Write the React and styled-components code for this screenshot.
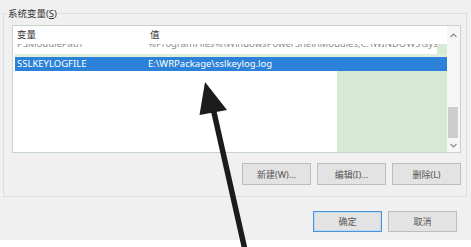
import React from 'react';
import styled, { createGlobalStyle } from 'styled-components';

const Global = createGlobalStyle`
  html, body { margin: 0; padding: 0; background: #f0f0f0; }
  body {
    width: 471px; height: 247px; overflow: hidden;
    font-family: "Noto Sans", "Noto Sans CJK SC", sans-serif;
  }
`;

const Screen = styled.div`
  position: relative;
  width: 471px;
  height: 247px;
  display: flex;
  flex-direction: column;
  background: #f0f0f0;
  overflow: hidden;
`;

const Dialog = styled.div`
  height: 240px;
  display: flex;
  flex-direction: column;
  padding: 13px 4px 0 3px;
  box-sizing: border-box;
`;

const WhiteStrip = styled.div`
  flex: 1;
  background: #ffffff;
`;

const GroupBox = styled.div`
  border: 1px solid #dedede;
  display: flex;
  flex-direction: column;
  padding: 0 5px 11px 8px;
`;

const Legend = styled.div`
  align-self: flex-start;
  margin: -7px 0 0 -5px;
  padding: 0 1px;
  height: 13px;
  line-height: 13px;
  font-size: 9.5px;
  color: #333;
  background: #f0f0f0;
  u { text-decoration: underline; }
`;

const ListBox = styled.div`
  margin-top: 5px;
  height: 128px;
  border: 1px solid #c6d3c8;
  box-sizing: border-box;
  display: flex;
  background: #fff;
`;

const ListMain = styled.div`
  flex: 1;
  display: flex;
  flex-direction: column;
  overflow: hidden;
`;

const Header = styled.div`
  height: 18px;
  flex: none;
  display: grid;
  grid-template-columns: 133px 1fr;
  align-items: center;
  font-size: 9.5px;
  color: #333;
`;

const HeaderCell = styled.div`
  padding-left: 4px;
  line-height: 16px;
`;

const Row = styled.div`
  flex: none;
  display: grid;
  grid-template-columns: 131px 1fr ${p => (p.$tail ? '10px' : '0px')};
  height: ${p => p.$h}px;
  margin-left: 2px;
  overflow: hidden;
  font-size: 9.5px;
  white-space: nowrap;
  background: ${p => (p.$selected ? '#2b82d8' : 'transparent')};
  color: ${p => (p.$selected ? '#ffffff' : '#8a8a8a')};
  border-bottom: ${p => (p.$band ? '3px solid #dfeedd' : 'none')};
  box-sizing: border-box;
`;

const Cell = styled.div`
  padding-left: 2px;
  overflow: hidden;
  line-height: ${p => p.$lh || 14}px;
  margin-top: ${p => p.$shift || 0}px;
`;

const GreenTail = styled.div`
  background: #d6ead4;
`;

const Filler = styled.div`
  flex: 1;
  display: flex;
  justify-content: flex-end;
`;

const GreenBlock = styled.div`
  width: 110px;
  background: #d5e9d3;
`;

const Scrollbar = styled.div`
  width: 13px;
  flex: none;
  display: flex;
  flex-direction: column;
  background: #f6f6f6;
`;

const ArrowBtn = styled.div`
  height: 13px;
  display: flex;
  align-items: center;
  justify-content: center;
  margin-top: ${p => (p.$top ? '3px' : '0')};
`;

const Track = styled.div`
  flex: 1;
  display: flex;
  flex-direction: column;
  justify-content: flex-end;
  padding: 0 2px 1px 1px;
`;

const Thumb = styled.div`
  height: 31px;
  background: #cdcdcd;
`;

const ButtonRow = styled.div`
  display: flex;
  justify-content: flex-end;
  gap: 6px;
  margin-top: 10px;
`;

const Button = styled.div`
  width: 69px;
  height: ${p => p.$h || 22}px;
  box-sizing: border-box;
  border: 1px solid ${p => (p.$primary ? '#4a94dc' : '#bdbdbd')};
  box-shadow: ${p => (p.$primary ? 'inset 0 0 0 1px #bcd8f2' : 'none')};
  background: #e3e3e3;
  display: flex;
  align-items: center;
  justify-content: center;
  font-size: 9px;
  color: #555;
`;

const FooterRow = styled.div`
  display: flex;
  justify-content: flex-end;
  gap: 6px;
  margin-top: 14px;
  padding-right: 10px;
`;

const ArrowOverlay = styled.svg`
  position: absolute;
  left: 0;
  top: 0;
  pointer-events: none;
`;

const Chevron = ({ up }) => (
  <svg width="7" height="5" viewBox="0 0 7 5">
    <polyline
      points={up ? '0.5,4 3.5,1 6.5,4' : '0.5,1 3.5,4 6.5,1'}
      fill="none"
      stroke="#8a8a8a"
      strokeWidth="1.1"
    />
  </svg>
);

export default function App() {
  return (
    <Screen>
      <Global />
      <Dialog>
        <GroupBox>
          <Legend>系统变量(<u>S</u>)</Legend>
          <ListBox>
            <ListMain>
              <Header>
                <HeaderCell>变量</HeaderCell>
                <HeaderCell>值</HeaderCell>
              </Header>
              <Row $h={13} $band $tail>
                <Cell $lh={14} $shift={-7}>PSModulePath</Cell>
                <Cell $lh={14} $shift={-7}>%ProgramFiles%\WindowsPowerShell\Modules;C:\WINDOWS\system32\Wi</Cell>
                <GreenTail />
              </Row>
              <Row $h={14} $selected>
                <Cell>SSLKEYLOGFILE</Cell>
                <Cell>E:\WRPackage\sslkeylog.log</Cell>
              </Row>
              <Filler>
                <GreenBlock />
              </Filler>
            </ListMain>
            <Scrollbar>
              <ArrowBtn $top><Chevron up /></ArrowBtn>
              <Track><Thumb /></Track>
              <ArrowBtn><Chevron /></ArrowBtn>
            </Scrollbar>
          </ListBox>
          <ButtonRow>
            <Button>新建(W)...</Button>
            <Button>编辑(I)...</Button>
            <Button>删除(L)</Button>
          </ButtonRow>
        </GroupBox>
        <FooterRow>
          <Button $h={21} $primary>确定</Button>
          <Button $h={21}>取消</Button>
        </FooterRow>
      </Dialog>
      <WhiteStrip />
      <ArrowOverlay width="471" height="247" viewBox="0 0 471 247">
        <line x1="213" y1="108" x2="245" y2="250" stroke="#1c1c1c" strokeWidth="5.5" />
        <polygon points="205,82 199.5,115 227,110" fill="#1c1c1c" />
      </ArrowOverlay>
    </Screen>
  );
}
